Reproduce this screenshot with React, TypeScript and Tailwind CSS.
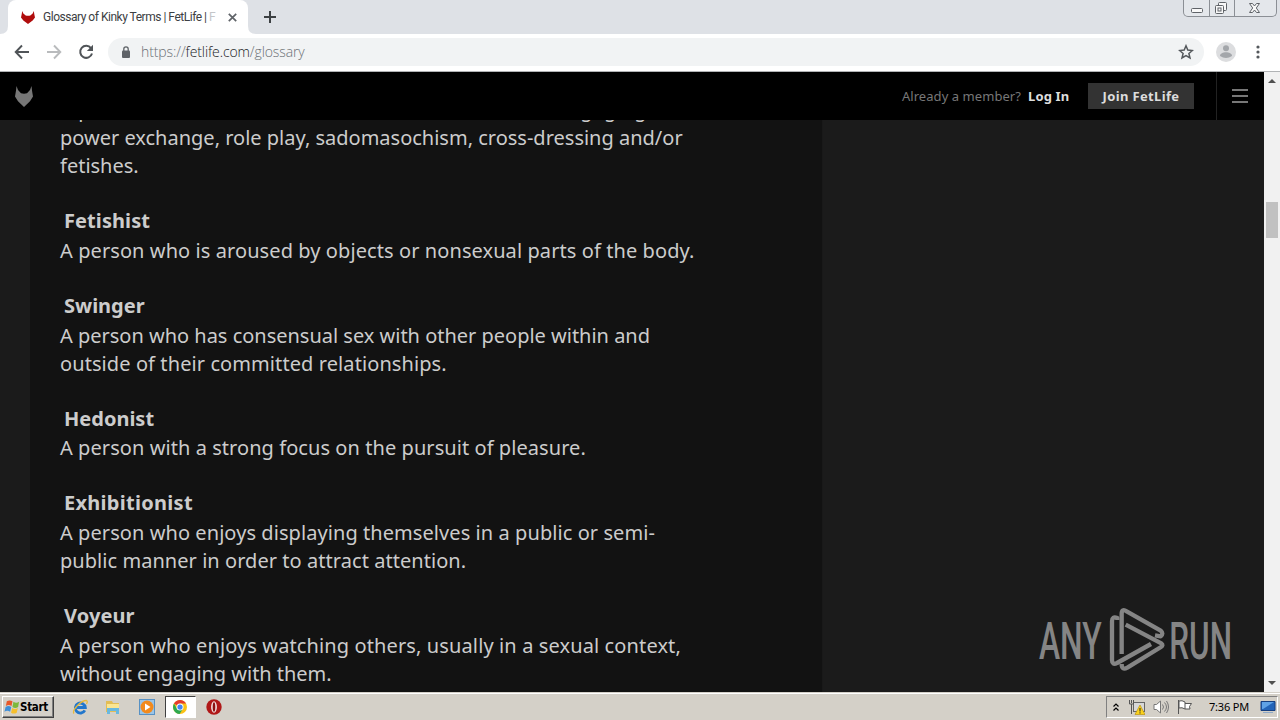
import type { ReactNode } from "react";
import { clsx } from "clsx";

interface Line {
  text: string;
  className?: string;
}

interface Entry {
  term: string;
  termClassName?: string;
  lines: Line[];
}

const intro: Line[] = [
  { text: "A person who is interested in and involved with and engaging in", className: "tracking-[0.13px]" },
  { text: "power exchange, role play, sadomasochism, cross-dressing and/or" },
  { text: "fetishes." },
];

const entries: Entry[] = [
  {
    term: "Fetishist",
    termClassName: "tracking-[0.08px]",
    lines: [
      { text: "A person who is aroused by objects or nonsexual parts of the body.", className: "tracking-[0.085px]" },
    ],
  },
  {
    term: "Swinger",
    lines: [
      { text: "A person who has consensual sex with other people within and", className: "tracking-[-0.01px]" },
      { text: "outside of their committed relationships.", className: "tracking-[0.09px]" },
    ],
  },
  {
    term: "Hedonist",
    lines: [
      { text: "A person with a strong focus on the pursuit of pleasure.", className: "tracking-[0.065px]" },
    ],
  },
  {
    term: "Exhibitionist",
    termClassName: "tracking-[0.28px]",
    lines: [
      { text: "A person who enjoys displaying themselves in a public or semi-", className: "tracking-[0.07px]" },
      { text: "public manner in order to attract attention.", className: "tracking-[0.05px]" },
    ],
  },
  {
    term: "Voyeur",
    termClassName: "tracking-[0.1px]",
    lines: [
      { text: "A person who enjoys watching others, usually in a sexual context,", className: "tracking-[0.12px]" },
      { text: "without engaging with them.", className: "tracking-[-0.03px]" },
    ],
  },
];

function Fox({ className }: { className?: string }) {
  return (
    <svg viewBox="0 0 24 26" preserveAspectRatio="none" className={className} fill="currentColor">
      <path d="M2 0 L4 5 L8 9 Q12 10 16 9 L20 5 L22 0 Q22.500 6 24 13 L20 19 L12 26 L4 19 L0 13 Q1.500 6 2 0Z" />
    </svg>
  );
}

function TabStrip() {
  return (
    <div className="flex h-[34px] shrink-0 justify-between bg-[#dee1e6]">
      <div className="flex pl-2">
        <div className="relative flex h-[34px] w-60 items-center rounded-t-lg bg-white pl-[13px]">
          <svg className="absolute bottom-0 -left-2 size-2 text-white" viewBox="0 0 8 8" fill="currentColor">
            <path d="M8 0V8H0Q8 8 8 0Z" />
          </svg>
          <svg className="absolute -right-2 bottom-0 size-2 text-white" viewBox="0 0 8 8" fill="currentColor">
            <path d="M0 0V8H8Q0 8 0 0Z" />
          </svg>
          <Fox className="h-[13px] w-[14px] text-[#b00d0d]" />
          <div className="ml-2 w-[176px] font-['Roboto'] text-xs tracking-[-0.48px] whitespace-nowrap text-[#3c4043]">
            Glossary of Kinky Terms | FetLife |<span className="text-[#c4c6c9]"> F</span>
          </div>
          <svg className="ml-[9px] size-[9px]" viewBox="0 0 9 9" stroke="#5f6368" strokeWidth="1.7">
            <path d="M.8.8 8.2 8.2M8.2.8.8 8.2" />
          </svg>
        </div>
        <svg className="mt-[11px] ml-4 size-3" viewBox="0 0 12 12" stroke="#3c4043" strokeWidth="2">
          <path d="M6 0V12M0 6H12" />
        </svg>
      </div>
      <div className="mr-[3px] flex h-[17px] w-[94px] rounded-b-[5px] border border-t-0 border-[#8b8f95] bg-[#e4e7eb]">
        <svg viewBox="0 0 92 16" className="h-4 w-[92px]" fill="#f8f8f8" stroke="#5f6368">
          <path d="M25.500 0V16M50.500 0V16" stroke="#8b8f95" />
          <rect x="7.500" y="8.500" width="11" height="4" rx="1" />
          <rect x="34.500" y="2.500" width="8" height="8" rx="1" />
          <rect x="31.500" y="5.500" width="8" height="8" rx="1" />
          <rect x="34" y="8" width="3" height="3" />
          <path d="M65.500 3.500h3l2 2.500 2-2.500h3l-3.200 4.500 3.200 4.500h-3l-2-2.500-2 2.500h-3l3.200-4.500z" />
        </svg>
      </div>
    </div>
  );
}

function Toolbar() {
  return (
    <div className="flex h-[38px] shrink-0 items-center border-b border-[#b1b3b5] bg-white pb-px pl-[14px]">
      <svg className="size-4" viewBox="0 0 16 16" fill="none" stroke="#505458" strokeWidth="1.9">
        <path d="M15 8H2M8 1.500 1.700 8 8 14.500" />
      </svg>
      <svg className="ml-4 size-4" viewBox="0 0 16 16" fill="none" stroke="#b9bbbd" strokeWidth="1.9">
        <path d="M1 8H14M8 1.500 14.300 8 8 14.500" />
      </svg>
      <svg className="ml-4 size-4" viewBox="0 0 16 16" fill="none" stroke="#505458" strokeWidth="2">
        <path d="M13 4.200A6 6 0 1 0 14 9.500" />
        <path d="M15 .8V7H8.800Z" fill="#505458" stroke="none" />
      </svg>
      <div className="ml-[14px] flex h-7 w-[1096px] items-center rounded-full bg-[#f1f3f4] pl-[13px]">
        <svg className="mb-px h-3 w-[10px]" viewBox="0 0 10 12" fill="#5f6368">
          <rect x="1" y="4.500" width="8" height="7.500" rx="1" />
          <path d="M2.800 5V3a2.200 2.200 0 0 1 4.400 0v2" fill="none" stroke="#5f6368" strokeWidth="1.300" />
        </svg>
        <div className="ml-[10px] w-[1037px] font-['Open_Sans'] text-sm font-light tracking-[-0.1px] text-[#6b7075]">
          https://<span className="text-[#202124]">fetlife.com</span>/glossary
        </div>
        <svg className="size-4" viewBox="0 0 16 16" fill="none" stroke="#54585c" strokeWidth="1.500">
          <path d="M8 1.800 9.800 6.100 14.400 6.500 10.900 9.500 12 14 8 11.600 4 14 5.100 9.500 1.600 6.500 6.200 6.100Z" />
        </svg>
      </div>
      <svg className="ml-3 size-5" viewBox="0 0 20 20">
        <circle cx="10" cy="10" r="10" fill="#dcdddf" />
        <circle cx="10" cy="6.300" r="3" fill="#a3a6aa" />
        <path d="M4 14c0-5 12-5 12 0q-6 4-12 0z" fill="#a3a6aa" />
      </svg>
      <svg className="ml-[20px] h-[14px] w-1" viewBox="0 0 4 14" fill="#54585c">
        <circle cx="2" cy="2" r="1.600" />
        <circle cx="2" cy="7" r="1.600" />
        <circle cx="2" cy="12" r="1.600" />
      </svg>
    </div>
  );
}

function SiteHeader() {
  return (
    <header className="flex h-12 shrink-0 items-center bg-black font-['Noto_Sans'] text-[13px]">
      <Fox className="ml-[15px] h-[21px] w-[18px] text-[#777]" />
      <span className="ml-auto pt-px tracking-[0.06px] text-[#777]">Already a member?</span>
      <span className="ml-[7px] w-[42px] pt-px font-bold tracking-[0.15px] whitespace-nowrap text-[#ddd]">Log In</span>
      <span className="ml-[18px] flex h-[26px] w-[106px] items-center justify-center bg-[#333] pt-px font-bold tracking-[0.35px] whitespace-nowrap text-[#ddd]">
        Join FetLife
      </span>
      <div className="ml-[22px] flex h-full w-12 flex-col items-center justify-center gap-1 border-l border-[#222] pr-px">
        <div className="h-[2px] w-4 bg-[#777]" />
        <div className="h-[2px] w-4 bg-[#777]" />
        <div className="h-[2px] w-4 bg-[#777]" />
      </div>
    </header>
  );
}

function TextLine({ line }: { line: Line }) {
  return (
    <div className="h-[28.2px] leading-[28px] whitespace-nowrap">
      <span className={line.className}>{line.text}</span>
    </div>
  );
}

function Glossary() {
  return (
    <div className="ml-[30px] h-[572px] w-[793px] shrink-0 overflow-hidden border-r border-[#191919] bg-[#121212] pl-[30px] font-['Noto_Sans'] text-xl text-[#ccc]">
      <div className="-mt-[24px] mb-[26.6px]">
        {intro.map((line) => (
          <TextLine key={line.text} line={line} />
        ))}
      </div>
      {entries.map((entry) => (
        <div key={entry.term} className="mb-[26.6px]">
          <div className={clsx("mb-[1.5px] ml-1 h-[28.3px] leading-[28.4px] font-bold", entry.termClassName)}>
            {entry.term}
          </div>
          {entry.lines.map((line) => (
            <TextLine key={line.text} line={line} />
          ))}
        </div>
      ))}
    </div>
  );
}

function Watermark() {
  return (
    <svg className="absolute top-[528px] left-[1020px] h-20 w-60" viewBox="0 0 720 240">
      <g fill="#858585" fontFamily="Roboto, sans-serif" fontSize="156" fontWeight="500">
        <text x="57" y="178" textLength="188" lengthAdjust="spacingAndGlyphs">ANY</text>
        <text x="448" y="178" textLength="188" lengthAdjust="spacingAndGlyphs">RUN</text>
      </g>
      <g fill="none" stroke="#858585" strokeWidth="13" strokeLinejoin="round">
        <path d="M292 60V54Q276 48 276 64V180Q276 196 291 189L393 132" />
        <path d="M305 162V42Q305 24 320 34L422 92Q432 101 422 109L405 106" />
        <path d="M317 74 424 130Q431 136 423 141L322 203Q305 212 305 192" />
      </g>
    </svg>
  );
}

function Scrollbar() {
  return (
    <div className="flex h-[620px] w-4 shrink-0 flex-col items-center bg-[#f1f1f1]">
      <svg className="mt-[7px] h-1 w-2" viewBox="0 0 8 4" fill="#505050">
        <path d="M0 4 4 0 8 4Z" />
      </svg>
      <div className="mt-[119px] h-9 w-3 bg-[#c1c1c1]" />
      <svg className="mt-auto mb-[7px] h-1 w-2" viewBox="0 0 8 4" fill="#505050">
        <path d="M0 0 4 4 8 0Z" />
      </svg>
    </div>
  );
}

function Slot({ active, children }: { active?: boolean; children: ReactNode }) {
  return (
    <div
      className={clsx(
        "flex h-[22px] w-[31px] items-center justify-center",
        active && "border border-t-[#404040] border-r-white border-b-white border-l-[#404040] bg-white",
      )}
    >
      {children}
    </div>
  );
}

function Taskbar() {
  return (
    <div className="flex h-7 shrink-0 items-center border-t border-[#d4d0c8] bg-[#d4d0c8] shadow-[inset_0_1px_0_#fff]">
      <div className="mt-px ml-[2px] flex h-[22px] w-[52px] items-center border border-t-white border-r-[#404040] border-b-[#404040] border-l-white pl-px shadow-[inset_-1px_-1px_0_#808080]">
        <svg className="h-4 w-4 shrink-0" viewBox="0 0 17 16">
          <path d="M3 2q3-2 6 0L8 7Q5 5 2 7Z" fill="#e8582a" />
          <path d="M10 2.500q3 2 6 0L15 8q-3 2-6 0Z" fill="#7db83a" />
          <path d="M1.700 8q3-2 6 0L6.500 13q-3-2-6 0Z" fill="#3f8fd8" />
          <path d="M8.700 9q3 2 6 0L13.500 14q-3 2-6 0Z" fill="#f6bf2c" />
        </svg>
        <span className="pt-px font-['DejaVu_Sans_Condensed','DejaVu_Sans'] text-[11.5px] font-bold tracking-[-0.3px] text-black">Start</span>
      </div>
      <div className="mt-px ml-[10px] flex gap-[2.5px]">
        <Slot>
          <svg className="size-4" viewBox="0 0 16 16" fill="none">
            <path d="M12.800 11.300A5 5 0 1 1 13.300 8.500H5" stroke="#2277cc" strokeWidth="2.800" />
            <path d="M2 14.500C-.5 11 9 1.500 14.500 1.500q1.500.5 0 3.500" stroke="#e8b93a" strokeWidth="1.300" />
          </svg>
        </Slot>
        <Slot>
          <svg className="size-4" viewBox="0 0 16 16">
            <path d="M1 2h6l1 2h6v9H1z" fill="#e3bd55" />
            <path d="M2 5h12v6H2z" fill="#fbe591" />
            <path d="M2 9h12v6h-3v-3H5v3H2z" fill="#69b8df" />
          </svg>
        </Slot>
        <Slot>
          <svg className="size-4" viewBox="0 0 16 16">
            <rect x=".5" y=".5" width="15" height="15" fill="#9ac5e8" stroke="#5791c4" />
            <circle cx="8" cy="8" r="6.500" fill="#f28a1c" />
            <path d="M6 4.500 11.500 8 6 11.500Z" fill="#fff" />
          </svg>
        </Slot>
        <Slot active>
          <svg className="size-[14px]" viewBox="0 0 16 16">
            <circle cx="8" cy="8" r="8" fill="#fbc116" />
            <path d="M8 8 1.100 4A8 8 0 0 1 14.900 4H8Z" fill="#e33b2e" />
            <path d="M1.100 4A8 8 0 0 0 7.500 16L11.500 10 8 11.500 4.500 10Z" fill="#2da94f" />
            <circle cx="8" cy="8" r="4" fill="#fff" />
            <circle cx="8" cy="8" r="3" fill="#4285f4" />
          </svg>
        </Slot>
        <Slot>
          <svg className="size-4" viewBox="0 0 16 16">
            <circle cx="8" cy="8" r="7.700" fill="#b01818" />
            <ellipse cx="8" cy="8" rx="2.900" ry="5.800" fill="#f4e4e4" />
            <ellipse cx="8" cy="8" rx="1.300" ry="4.800" fill="#8c1010" />
          </svg>
        </Slot>
      </div>
      <div className="mt-px mr-[2px] ml-auto flex h-[22px] w-[172px] items-center border border-t-[#808080] border-r-white border-b-white border-l-[#808080] pl-[6px]">
        <svg className="mb-px h-2 w-[6px]" viewBox="0 0 6 8" fill="none" stroke="#000" strokeWidth="1.200">
          <path d="M.5 3.500 3 1 5.500 3.500M.5 7.500 3 5 5.500 7.500" />
        </svg>
        <svg className="ml-[10px] size-4" viewBox="0 0 16 16">
          <rect x="4.500" y="3.500" width="11" height="9" fill="#d8d8d8" stroke="#666" />
          <path d="M.5 1v4h4V1M2.500 1v3M2.500 5v10" fill="none" stroke="#555" />
          <path d="M11 6 16 15.500H6Z" fill="#fbd21c" stroke="#b48a00" strokeWidth=".6" />
          <path d="M11 9v3.500M11 13.300v1.200" stroke="#222" />
        </svg>
        <svg className="ml-2 size-4" viewBox="0 0 16 16" fill="none" stroke="#777">
          <path d="M1 5.500h2.500L7.500 2v12l-4-3.500H1z" fill="#fff" />
          <path d="M9.500 5.500q2 2.500 0 5M11.500 3.500q4 4.500 0 9M13.500 2q4 6 0 12" />
        </svg>
        <svg className="ml-2 size-4" viewBox="0 0 16 16" fill="#fff" stroke="#555">
          <path d="M1.500 1v14M2 2q3-1 6 1v7Q5 8 2 9ZM8 4.500h6.500l-2 3 .5 2.500H8" />
        </svg>
        <span className="ml-4 w-[42px] font-['Noto_Sans'] text-[11px] tracking-[-0.2px] whitespace-nowrap text-black">7:36 PM</span>
        <svg className="ml-[9px] size-4" viewBox="0 0 16 16">
          <path d="M1 2.500h14v9H1z" fill="#2364b8" stroke="#163f80" />
          <path d="M2 3h12L3 10H2z" fill="#5fa2e6" />
          <path d="M3 13h10v1H3z" fill="#8fa9c7" />
        </svg>
      </div>
    </div>
  );
}

export default function App() {
  return (
    <div className="flex h-[720px] w-[1280px] flex-col overflow-hidden">
      <TabStrip />
      <Toolbar />
      <div className="relative flex h-[620px] shrink-0">
        <div className="flex w-[1264px] flex-col bg-[#1b1b1b]">
          <SiteHeader />
          <Glossary />
        </div>
        <Scrollbar />
        <Watermark />
      </div>
      <Taskbar />
    </div>
  );
}
